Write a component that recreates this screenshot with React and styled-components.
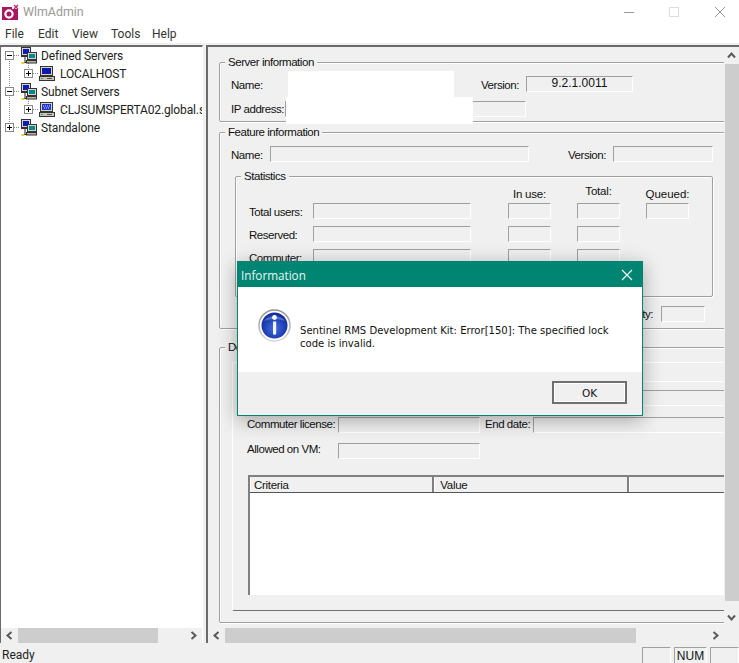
import React from "react";
import styled, { createGlobalStyle } from "styled-components";

const Global = createGlobalStyle`
  html, body { margin: 0; padding: 0; background: #f0f0f0; }
  * { box-sizing: border-box; }
`;

const Win = styled.div`
  position: relative;
  width: 739px;
  height: 663px;
  overflow: hidden;
  background: #f0f0f0;
  display: flex;
  flex-direction: column;
  font-family: "Liberation Sans", Arial, sans-serif;
  font-size: 12px;
  color: #111;
`;
const TitleBar = styled.div`
  height: 28px;
  background: #fff;
  display: flex;
  align-items: flex-start;
  padding: 2px 14px 0 2px;
`;
const TitleText = styled.span`
  font-family: Roboto, sans-serif;
  font-size: 12.4px;
  line-height: 20px;
  color: #999;
  margin-left: 3px;
  flex: 1;
`;
const WinButtons = styled.div`
  display: flex;
  gap: 35px;
  padding-top: 5px;
`;
const MenuBar = styled.div`
  height: 15px;
  background: #fff;
  display: flex;
  padding-left: 5px;
  font-family: Roboto, sans-serif;
  font-size: 12px;
  line-height: 13px;
  color: #333;
`;
const MenuItem = styled.span`
  width: ${(p) => p.$w}px;
`;
const Spacer = styled.div`
  height: 2px;
  background: #f0f0f0;
`;
const Main = styled.div`
  display: flex;
  height: 599px;
  gap: 3px;
`;
const LeftPane = styled.div`
  width: 203px;
  display: flex;
  flex-direction: column;
  height: 598px;
  border-top: 2px solid #6b6b6b;
  border-left: 1px solid #6b6b6b;
  border-right: 1px solid #fff;
`;
const Tree = styled.div`
  flex: 1;
  background: #fff;
  overflow: hidden;
  font-family: Roboto, sans-serif;
  font-size: 12px;
  letter-spacing: -0.13px;
  color: #222;
`;
const TreeRow = styled.div`
  height: 18px;
  display: flex;
  align-items: center;
  white-space: nowrap;
`;
const TreeText = styled.span`
  margin-bottom: 1px;
`;
const RightPane = styled.div`
  position: relative;
  width: 533px;
  height: 598px;
  border-top: 2px solid #6b6b6b;
  border-left: 2px solid #6b6b6b;
  display: flex;
  flex-direction: column;
`;
const PaneBody = styled.div`
  display: flex;
  flex: 1;
  min-height: 0;
`;
const Viewport = styled.div`
  position: relative;
  width: 516px;
  height: 580px;
  overflow: hidden;
  padding: 8px 0 0 11px;
`;
const Group = styled.fieldset`
  margin: ${(p) => p.$before || 0}px 0 ${(p) => p.$after || 0}px ${(p) => p.$left || 0}px;
  padding: ${(p) => p.$pt}px ${(p) => p.$pr || 0}px 0 ${(p) => p.$pl}px;
  width: ${(p) => p.$w}px;
  min-width: 0;
  height: ${(p) => p.$h}px;
  border: 1px solid #a0a0a0;
  border-radius: 2px;
  box-shadow: 1px 1px 0 #fff, inset 1px 1px 0 #fff;
`;
const Legend = styled.legend`
  margin-left: ${(p) => p.$ml ?? 5}px;
  padding: 0 3px;
  font-size: 11.5px;
  letter-spacing: -0.45px;
  line-height: 14px;
  background: #f0f0f0;
  height: 14px;
`;
const Row = styled.div`
  display: flex;
  align-items: center;
  height: 16px;
  margin-top: ${(p) => p.$mt || 0}px;
  margin-left: ${(p) => p.$ml || 0}px;
  justify-content: ${(p) => (p.$end ? "flex-end" : "flex-start")};
  white-space: nowrap;
`;
const Label = styled.span`
  width: ${(p) => p.$w}px;
  margin-left: ${(p) => p.$ml || 0}px;
  margin-right: ${(p) => p.$mr || 0}px;
  flex: none;
  font-size: 11.5px;
  letter-spacing: -0.45px;
  text-align: ${(p) => (p.$right ? "right" : "left")};
  padding-top: ${(p) => p.$pt ?? 2}px;
  padding-bottom: ${(p) => p.$pb || 0}px;
`;
const Field = styled.div`
  flex: none;
  width: ${(p) => p.$w}px;
  height: 16px;
  border-top: 1px solid ${(p) => (p.$bare ? "transparent" : "#a0a0a0")};
  border-left: 1px solid ${(p) => (p.$bare ? "transparent" : "#a0a0a0")};
  border-bottom: 1px solid #fff;
  border-right: 1px solid ${(p) => (p.$bare ? "transparent" : "#fff")};
  margin-left: ${(p) => p.$ml || 0}px;
  text-align: center;
  font-size: 12px;
  line-height: 13px;
`;
const StatHead = styled.div`
  margin-left: 13px;
  height: 11px;
  display: grid;
  grid-template-columns: 64px 158px 37px 43px 26px 43px 26px 43px;
`;
const HeadText = styled.span`
  grid-column: ${(p) => p.$col};
  justify-self: center;
  font-size: 11.5px;
  letter-spacing: ${(p) => p.$ls ?? -0.2}px;
  line-height: 14px;
  white-space: nowrap;
  margin-top: ${(p) => p.$mt}px;
`;
const StatRows = styled.div`
  display: flex;
  flex-direction: column;
  gap: 7px;
  padding: 9px 0 0 13px;
`;
const Panel = styled.div`
  width: 600px;
  height: 249px;
  margin: 8px 0 0 12px;
  padding: 3px 0 0 14px;
  border-left: 1px solid #fff;
  border-top: 1px solid #fff;
  border-bottom: 1px solid #707070;
  border-radius: 2px;
`;
const List = styled.div`
  width: 560px;
  height: 120px;
  margin: 16px 0 0 1px;
  background: #fff;
  border-top: 2px solid #808080;
  border-left: 2px solid #808080;
`;
const ListHead = styled.div`
  display: flex;
  height: 15px;
  background: #f0f0f0;
  border-bottom: 1px solid #555;
  box-sizing: content-box;
`;
const ListCol = styled.div`
  width: ${(p) => p.$w}px;
  padding-left: ${(p) => p.$pl ?? 5}px;
  font-size: 11.5px;
  letter-spacing: -0.3px;
  line-height: 16px;
  border-left: 1px solid #fff;
  border-right: 2px solid #808080;
`;
const VScroll = styled.div`
  width: 15px;
  height: 580px;
  display: flex;
  flex-direction: column;
`;
const VThumb = styled.div`
  height: 537px;
  margin-left: 1px;
  background: #cdcdcd;
`;
const ScrollBtnV = styled.div`
  height: ${(p) => p.$h}px;
  padding-top: ${(p) => p.$pt || 0}px;
  display: flex;
  align-items: center;
  justify-content: center;
`;
const HScroll = styled.div`
  height: 15px;
  display: flex;
  background: #f0f0f0;
  flex: none;
  width: ${(p) => p.$w || "auto"};
`;
const ScrollBtnH = styled.div`
  width: 17px;
  display: flex;
  align-items: center;
  justify-content: center;
`;
const HThumb = styled.div`
  width: ${(p) => p.$w}px;
  background: #cdcdcd;
`;
const Track = styled.div`
  flex: 1;
`;
const StatusBar = styled.div`
  height: 19px;
  display: flex;
  align-items: flex-end;
  padding-left: 2px;
`;
const StatusText = styled.span`
  flex: 1;
  font-family: Roboto, sans-serif;
  font-size: 12px;
  line-height: 16px;
  color: #222;
  align-self: flex-end;
  padding-bottom: 0;
`;
const StatusCell = styled.div`
  width: ${(p) => p.$w}px;
  height: 16px;
  margin-left: ${(p) => p.$ml || 0}px;
  border-top: 1px solid #a0a0a0;
  border-left: 1px solid #a0a0a0;
  border-right: 1px solid #fff;
  text-align: center;
  font-size: 12px;
  line-height: 16px;
`;
const Redact = styled.div`
  position: absolute;
  left: ${(p) => p.$x}px;
  top: ${(p) => p.$y}px;
  width: ${(p) => p.$w}px;
  height: ${(p) => p.$h}px;
  background: #fff;
`;
const Dialog = styled.div`
  position: absolute;
  left: 237px;
  top: 261px;
  width: 406px;
  height: 155px;
  border: 1px solid #008573;
  background: #f0f0f0;
  display: flex;
  flex-direction: column;
  box-shadow: 0 4px 18px rgba(0, 0, 0, 0.32);
`;
const DialogTitle = styled.div`
  height: 25px;
  background: #008573;
  color: #e8f6f3;
  display: flex;
  align-items: center;
  justify-content: space-between;
  padding: 0 9px 0 3px;
  font-family: "Open Sans", sans-serif;
  font-size: 11.7px;
`;
const DialogBody = styled.div`
  height: 85px;
  background: #fff;
  display: flex;
  padding: 22px 0 0 20px;
`;
const Message = styled.div`
  margin: 15px 0 0 9px;
  width: 320px;
  font-family: "DejaVu Sans", sans-serif;
  font-size: 10.05px;
  line-height: 13px;
  color: #111;
`;
const DialogFooter = styled.div`
  flex: 1;
  display: flex;
  justify-content: flex-end;
  padding: 9px 15px 0 0;
`;
const OkButton = styled.button`
  width: 75px;
  height: 23px;
  padding: 0;
  background: #f0f0f0;
  border: 2px solid #6f6f6f;
  box-shadow: inset 1px 1px 0 #fff, inset -1px -1px 0 #fff;
  font-family: "DejaVu Sans", sans-serif;
  font-size: 10.5px;
  color: #111;
`;

const Chevron = ({ dir }) => {
  const rot = { left: 0, right: 180, up: 90, down: 270 }[dir];
  return (
    <svg width="9" height="9" viewBox="0 0 9 9" style={{ transform: `rotate(${rot}deg)` }}>
      <path d="M6.5 1 L2.5 4.5 L6.5 8" fill="none" stroke="#5a5a5a" strokeWidth="2" />
    </svg>
  );
};

const AppIcon = () => (
  <svg width="18" height="19" viewBox="0 0 18 19" style={{ flex: "none" }}>
    <rect x="0" y="5" width="16" height="13" fill="#a8175f" />
    <rect x="10" y="0" width="8" height="7" fill="#fff" />
    <circle cx="7" cy="12" r="3.6" fill="none" stroke="#fff" strokeWidth="2.2" />
    <path d="M12 3 L16 7 M16 3 L12 7" stroke="#b8306f" strokeWidth="1.4" />
  </svg>
);

const Computer = ({ x, y, screen = "#0a18a8", hatch }) => (
  <g transform={`translate(${x} ${y})`}>
    <rect x="1.5" y="0.5" width="12" height="9" fill="#d8d4c8" stroke="#333" />
    <rect x="3" y="2" width="9" height="6" fill={screen} />
    {hatch && <path d="M4 4h1M6 4h1M8 4h1M10 4h1M5 6h1M7 6h1M9 6h1" stroke="#cfe0ff" />}
    <rect x="0.5" y="10.5" width="15" height="4" fill="#c8c4b8" stroke="#333" />
    <path d="M2 12.5h2" stroke="#18b038" />
    <path d="M8 12.5h5" stroke="#555" />
  </g>
);

const ServersIcon = ({ x }) => (
  <g transform={`translate(${x} 0)`}>
    <path d="M5 10 v5 M3 15.5 h8" stroke="#222" />
    <rect x="1.5" y="0.5" width="9" height="8" fill="#d8d4c8" stroke="#333" />
    <rect x="3" y="2" width="6" height="5" fill="#0a18c8" />
    <path d="M1 9.5h10" stroke="#333" />
    <rect x="7.5" y="5.5" width="9" height="7" fill="#d8d4c8" stroke="#333" />
    <rect x="9" y="7" width="6" height="4" fill="#008a90" />
    <rect x="6.5" y="13.5" width="10" height="2.5" fill="#b8b4a8" stroke="#333" />
    <rect x="1.5" y="15" width="3" height="2" fill="#e8d020" />
  </g>
);

const Expander = ({ x, open }) => (
  <g>
    <rect x={x + 0.5} y="4.5" width="8" height="8" fill="#fff" stroke="#8a8a8a" />
    <path d={`M${x + 2} 8.5 h5`} stroke="#000" />
    {!open && <path d={`M${x + 4.5} 6 v5`} stroke="#000" />}
  </g>
);

const Dots = ({ d }) => <path d={d} stroke="#8a8a8a" strokeDasharray="1 1" fill="none" />;

const TreeGutter = ({ width, children }) => (
  <svg width={width} height="18" viewBox={`0 0 ${width} 18`} style={{ flex: "none" }}>
    {children}
  </svg>
);

const InfoIcon = () => (
  <svg width="33" height="33" viewBox="0 0 33 33" style={{ flex: "none" }}>
    <defs>
      <radialGradient id="b" cx="50%" cy="60%" r="60%">
        <stop offset="0%" stopColor="#3f6fe0" />
        <stop offset="100%" stopColor="#10289a" />
      </radialGradient>
      <linearGradient id="r" x1="0" y1="0" x2="0" y2="1">
        <stop offset="0%" stopColor="#8a8f9a" />
        <stop offset="100%" stopColor="#d8dae0" />
      </linearGradient>
    </defs>
    <circle cx="16.5" cy="16.5" r="15.5" fill="#fff" stroke="url(#r)" strokeWidth="1.6" />
    <circle cx="16.5" cy="16.5" r="13" fill="url(#b)" />
    <path d="M6 12 a12 9 0 0 1 21 0 a18 10 0 0 0 -21 0" fill="#8fa8ea" opacity="0.5" />
    <circle cx="16.5" cy="8.5" r="2.4" fill="#fff" />
    <path d="M15 12.5 h3.2 v12.5 l-1.6 1 l-1.6 -1 z" fill="#f2f4fa" />
  </svg>
);

export default function App() {
  return (
    <Win>
      <Global />
      <TitleBar>
        <AppIcon />
        <TitleText>WlmAdmin</TitleText>
        <WinButtons>
          <svg width="10" height="10" viewBox="0 0 10 10"><path d="M0 5.5 H10" stroke="#999" /></svg>
          <svg width="10" height="10" viewBox="0 0 10 10"><rect x=".5" y=".5" width="9" height="9" fill="none" stroke="#ddd" /></svg>
          <svg width="10" height="10" viewBox="0 0 10 10" style={{ marginLeft: 1 }}><path d="M0 0 L10 10 M10 0 L0 10" stroke="#999" /></svg>
        </WinButtons>
      </TitleBar>
      <MenuBar>
        <MenuItem $w={33}>File</MenuItem>
        <MenuItem $w={34}>Edit</MenuItem>
        <MenuItem $w={39}>View</MenuItem>
        <MenuItem $w={41}>Tools</MenuItem>
        <MenuItem $w={40}>Help</MenuItem>
      </MenuBar>
      <Spacer />
      <Main>
        <LeftPane>
          <Tree>
            <TreeRow>
              <TreeGutter width={40}>
                <Dots d="M8.5 12 V18 M13 8.5 H19" />
                <Dots d="M27.5 14 V18" />
                <Expander x={4} open />
                <ServersIcon x={19} />
              </TreeGutter>
              <TreeText>Defined Servers</TreeText>
            </TreeRow>
            <TreeRow>
              <TreeGutter width={59}>
                <Dots d="M8.5 0 V18 M27.5 0 V5 M32 8.5 H38" />
                <Expander x={23} />
                <Computer x={38} y={1} />
              </TreeGutter>
              <TreeText>LOCALHOST</TreeText>
            </TreeRow>
            <TreeRow>
              <TreeGutter width={40}>
                <Dots d="M8.5 0 V4 M8.5 12 V18 M13 8.5 H19 M27.5 14 V18" />
                <Expander x={4} open />
                <ServersIcon x={19} />
              </TreeGutter>
              <TreeText>Subnet Servers</TreeText>
            </TreeRow>
            <TreeRow>
              <TreeGutter width={59}>
                <Dots d="M8.5 0 V18 M27.5 0 V5 M32 8.5 H38" />
                <Expander x={23} />
                <Computer x={38} y={1} screen="#2038c8" hatch />
              </TreeGutter>
              <TreeText>CLJSUMSPERTA02.global.sc</TreeText>
            </TreeRow>
            <TreeRow>
              <TreeGutter width={40}>
                <Dots d="M8.5 0 V4 M13 8.5 H19" />
                <Expander x={4} />
                <ServersIcon x={19} />
              </TreeGutter>
              <TreeText>Standalone</TreeText>
            </TreeRow>
          </Tree>
          <HScroll>
            <ScrollBtnH><Chevron dir="left" /></ScrollBtnH>
            <HThumb $w={140} />
            <Track />
            <ScrollBtnH><Chevron dir="right" /></ScrollBtnH>
          </HScroll>
        </LeftPane>
        <RightPane>
          <PaneBody>
            <Viewport>
              <Group $w={510} $h={67} $pt={7} $pl={11} $after={3}>
                <Legend $ml={-6}>Server information</Legend>
                <Row>
                  <Label $w={250}>Name:</Label>
                  <Label $w={45}>Version:</Label>
                  <Field $w={107}>9.2.1.0011</Field>
                </Row>
                <Row $mt={9}>
                  <Label $w={54} $pt={0}>IP address:</Label>
                  <Field $w={241} />
                </Row>
              </Group>
              <Group $w={510} $h={204} $pt={7} $pl={11} $pr={23} $after={11}>
                <Legend $ml={-6}>Feature information</Legend>
                <Row>
                  <Label $w={39}>Name:</Label>
                  <Field $w={259} />
                  <Label $w={45} $ml={39}>Version:</Label>
                  <Field $w={100} />
                </Row>
                <Group $w={478} $h={128} $pt={0} $pl={0} $left={4} $before={7}>
                  <Legend>Statistics</Legend>
                  <StatHead>
                    <HeadText $col={4} $mt={4}>In use:</HeadText>
                    <HeadText $col={6} $mt={1}>Total:</HeadText>
                    <HeadText $col={8} $mt={4} $ls={0}>Queued:</HeadText>
                  </StatHead>
                  <StatRows>
                    <Row>
                      <Label $w={64} $pt={2}>Total users:</Label>
                      <Field $w={158} />
                      <Field $w={43} $ml={37} />
                      <Field $w={43} $ml={26} />
                      <Field $w={43} $ml={26} />
                    </Row>
                    <Row>
                      <Label $w={64} $pt={1}>Reserved:</Label>
                      <Field $w={158} />
                      <Field $w={43} $ml={37} />
                      <Field $w={43} $ml={26} />
                    </Row>
                    <Row>
                      <Label $w={64} $pt={1}>Commuter:</Label>
                      <Field $w={158} />
                      <Field $w={43} $ml={37} />
                      <Field $w={43} $ml={26} />
                    </Row>
                  </StatRows>
                </Group>
                <Row $mt={9} $end>
                  <Label $w={60} $mr={8} $pt={0} $right>Capacity:</Label>
                  <Field $w={44} />
                </Row>
              </Group>
              <Group $w={510} $h={283} $pt={0} $pl={0}>
                <Legend>Details</Legend>
                <Panel>
                  <Row $ml={286}><Field $w={220} $bare /></Row>
                  <Row $ml={286} $mt={8}><Field $w={220} /></Row>
                  <Row $mt={11}>
                    <Label $w={91} $pt={0} $pb={2}>Commuter license:</Label>
                    <Field $w={142} />
                    <Label $w={48} $ml={5} $pt={0} $pb={2}>End date:</Label>
                    <Field $w={220} />
                  </Row>
                  <Row $mt={10}>
                    <Label $w={91} $pt={0} $pb={4}>Allowed on VM:</Label>
                    <Field $w={142} />
                  </Row>
                  <List>
                    <ListHead>
                      <ListCol $w={185} $pl={3}>Criteria</ListCol>
                      <ListCol $w={195}>Value</ListCol>
                      <ListCol $w={180} />
                    </ListHead>
                  </List>
                </Panel>
              </Group>
            </Viewport>
            <VScroll>
              <ScrollBtnV $h={17}><Chevron dir="up" /></ScrollBtnV>
              <VThumb />
              <ScrollBtnV $h={26} $pt={7}><Chevron dir="down" /></ScrollBtnV>
            </VScroll>
          </PaneBody>
          <HScroll $w="516px">
            <ScrollBtnH><Chevron dir="left" /></ScrollBtnH>
            <HThumb $w={411} />
            <Track />
            <ScrollBtnH><Chevron dir="right" /></ScrollBtnH>
          </HScroll>
          <Redact $x={80} $y={24} $w={166} $h={26} />
          <Redact $x={78} $y={50} $w={187} $h={27} />
        </RightPane>
      </Main>
      <StatusBar>
        <StatusText>Ready</StatusText>
        <StatusCell $w={29} />
        <StatusCell $w={33} $ml={3}>NUM</StatusCell>
        <StatusCell $w={29} $ml={3} />
      </StatusBar>
      <Dialog>
        <DialogTitle>
          Information
          <svg width="12" height="12" viewBox="0 0 12 12"><path d="M1 1 L11 11 M11 1 L1 11" stroke="#fff" strokeWidth="1.1" /></svg>
        </DialogTitle>
        <DialogBody>
          <InfoIcon />
          <Message>Sentinel RMS Development Kit: Error[150]: The specified lock code is invalid.</Message>
        </DialogBody>
        <DialogFooter>
          <OkButton>OK</OkButton>
        </DialogFooter>
      </Dialog>
    </Win>
  );
}
